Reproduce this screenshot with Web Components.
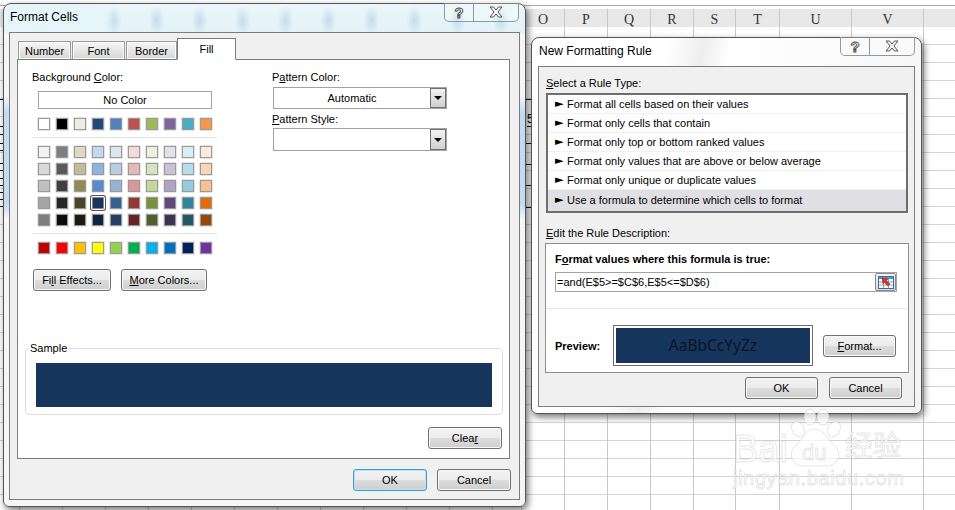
<!DOCTYPE html>
<html>
<head>
<meta charset="utf-8">
<title>Format Cells</title>
<style>
  html, body { margin: 0; height: 100%; overflow: hidden; }
  body { position: relative; width: 955px; height: 510px; font: 11px "Liberation Sans", sans-serif; color: #000; background: #fff; }
  #format-cells {
    left: 3px; top: 3px; width: 523px; height: 504px; --side: 5px;
    --glass:
      linear-gradient(to right, #e6f5f9 85px, transparent 112px) 0 0 / 100% 30px no-repeat,
      linear-gradient(to bottom, transparent 92px, rgba(165,205,240,.65) 108px, rgba(165,205,240,.65) 200px, transparent 215px),
      radial-gradient(ellipse 8px 15px at 50% 55%, rgba(100,150,200,.26), transparent) 2px 0 / 43px 30px repeat-x,
      linear-gradient(#eaf6fa, #e2f3f8 30px, #f6f6f6 30px);
  }
  #new-rule {
    left: 531px; top: 37px; width: 391px; height: 377px; --side: 6px;
    --glass: linear-gradient(100deg, #fff 0 30%, #eee 38%, #fff 44%, #f4f4f4 100%);
  }
  u { text-underline-offset: 1px; }
</style>
</head>
<body>
<xl-sheet></xl-sheet>

<xl-window id="format-cells" heading="Format Cells">
  <xl-tabs></xl-tabs>
  <xl-fill-page></xl-fill-page>
  <xl-footer>
    <xl-button default>OK</xl-button>
    <xl-button>Cancel</xl-button>
  </xl-footer>
</xl-window>

<xl-window id="new-rule" heading="New Formatting Rule">
  <xl-rule-page></xl-rule-page>
</xl-window>

<xl-watermark></xl-watermark>

<script>
const THEME = [
  ['#F2F2F2','#7F7F7F','#DDD9C3','#C6D9F0','#DBE5F1','#F2DCDB','#EBF1DD','#E5E0EC','#DBEEF3','#FDEADA'],
  ['#D8D8D8','#595959','#C4BD97','#8DB3E2','#B8CCE4','#E5B9B7','#D7E3BC','#CCC1D9','#B7DDE8','#FBD5B5'],
  ['#BFBFBF','#3F3F3F','#938953','#548DD4','#95B3D7','#D99694','#C3D69B','#B2A2C7','#92CDDC','#FAC08F'],
  ['#A5A5A5','#262626','#494429','#17365D','#366092','#953734','#76923C','#5F497A','#31859B','#E36C09'],
  ['#7F7F7F','#0C0C0C','#1D1B10','#0F243E','#244061','#632423','#4F6128','#3F3151','#205867','#974806']
]
const BASE = ['#FFFFFF','#000000','#EEECE1','#1F497D','#4F81BD','#C0504D','#9BBB59','#8064A2','#4BACC6','#F79646']
const STANDARD = ['#C00000','#FF0000','#FFC000','#FFFF00','#92D050','#00B050','#00B0F0','#0070C0','#002060','#7030A0']
const RULES = [
  'Format all cells based on their values',
  'Format only cells that contain',
  'Format only top or bottom ranked values',
  'Format only values that are above or below average',
  'Format only unique or duplicate values',
  'Use a formula to determine which cells to format'
]

class Base extends HTMLElement {
  constructor() {
    super()
    this.attachShadow({ mode: 'open' }).innerHTML = this.markup()
  }
}

class XlSheet extends Base {
  markup() {
    const edges = [21, 64, 107, 150, 193, 236, 279, 322, 365, 408, 451, 494, 523, 566, 609, 652, 695, 737, 781, 853, 925, 997]
    const names = { 566: 'O', 609: 'P', 652: 'Q', 695: 'R', 737: 'S', 781: 'T', 853: 'U', 925: 'V' }
    let cols = `<div class="col" style="width:20px"><span></span></div>`
    for (let i = 1; i < edges.length; i++) {
      cols += `<div class="col" style="width:${edges[i] - edges[i - 1]}px"><span>${names[edges[i]] || ''}</span></div>`
    }
    const ticks = [99, 126, 134, 143, 150, 163, 170, 178, 185, 192, 199, 206].map(y => `<i style="left:0;top:${y}px;width:3px"></i>`).join('')
      + [99, 143, 164, 185, 207].map(y => `<i style="left:526px;top:${y}px;width:6px"></i>`).join('')
    return `<style>
      :host { display: block; position: absolute; inset: 0; overflow: hidden; background: #fff; }
      .top { height: 5px; }
      .line { height: 1px; background: #a8a8a8; }
      .gap { height: 3px; }
      .cols { display: flex; height: 501px; background:
        linear-gradient(#e8e8e8 0 18px, transparent 18px),
        repeating-linear-gradient(to bottom, transparent 0 17px, #d4d4d4 17px 18px) 0 18px; }
      .col { flex: none; box-sizing: border-box; border-right: 1px solid #c9c9c9; }
      .col span { display: block; height: 18px; font: 14px/22px "Liberation Serif", serif; text-align: center; color: #333; }
      i { position: absolute; height: 1px; background: #111; }
      b { position: absolute; left: 527px; top: 112px; font: 12px/14px "Liberation Sans", sans-serif; border-bottom: 1px solid #111; }
    </style>
    <div class="top"></div><div class="line"></div><div class="gap"></div>
    <div class="cols">${cols}</div>${ticks}<b>5</b>`
  }
}

class XlWindow extends Base {
  markup() {
    return `<style>
      :host { display: flex; flex-direction: column; position: absolute; box-sizing: border-box;
        border: 1px solid #555; border-radius: 8px 8px 6px 6px;
        padding: 0 var(--side) 6px; background: var(--glass);
        box-shadow: 2px 3px 7px rgba(0,0,0,.55); }
      .bar { flex: none; height: 28px; font: 12px/27px "Liberation Sans", sans-serif; padding-left: 1px; color: #000; }
      .panel { flex: 1; display: flex; flex-direction: column; min-height: 0; background: #f0f0f0; border: 1px solid #7c7c7c; }
      .caption { position: absolute; top: -1px; right: 6px; width: 75px; height: 19px; box-sizing: border-box; display: flex;
        border: 1px solid #8c9aa1; border-top: 0; border-radius: 0 0 5px 5px; background: rgba(255,255,255,.25); }
      .caption div { display: flex; align-items: center; justify-content: center; }
      .help { width: 28px; border-right: 1px solid #8c9aa1; font: bold 15px/17px "Liberation Sans", sans-serif; color: #fff; -webkit-text-stroke: .9px #444; }
      .close { flex: 1; }
    </style>
    <div class="bar"></div>
    <div class="caption">
      <div class="help">?</div>
      <div class="close"><svg width="14" height="12" viewBox="0 0 14 12"><path d="M1 1h3.500L7 4l2.500-3H13L9 6l4 5H9.500L7 8l-2.500 3H1l4-5z" fill="#f4f4f4" stroke="#555" stroke-width="1"/></svg></div>
    </div>
    <div class="panel"><slot></slot></div>`
  }
  connectedCallback() {
    this.shadowRoot.querySelector('.bar').textContent = this.getAttribute('heading')
  }
}

class XlButton extends Base {
  markup() {
    return `<style>
      :host { display: inline-flex; flex: none; align-items: center; justify-content: center; box-sizing: border-box; width: 74px; height: 22px;
        border: 1px solid #707070; border-radius: 3px; box-shadow: inset 0 0 0 1px #f8f8f8;
        background: linear-gradient(#f3f3f3, #ebebeb 49%, #dcdcdc 50%, #cfcfcf); font-size: 11px; cursor: default; }
      :host([default]) { border-color: #36a0d6; box-shadow: inset 0 0 0 1px #b5e4f5; }
    </style><slot></slot>`
  }
}

class XlFooter extends Base {
  markup() {
    return `<style>
      :host { display: flex; justify-content: flex-end; gap: 10px; padding: 10px 8px 0 0; }
    </style><slot></slot>`
  }
}

class XlTabs extends Base {
  markup() {
    return `<style>
      :host { display: flex; flex: none; align-items: flex-end; height: 27px; margin-bottom: -1px; padding-left: 8px; position: relative; z-index: 1; }
      div { box-sizing: border-box; height: 19px; margin-right: 1px; text-align: center; line-height: 18px;
        border: 1px solid #9a9a9a; border-bottom: 1px solid #7c7c7c;
        background: linear-gradient(#f6f6f6, #e8e8e8 45%, #d6d6d6); box-shadow: inset 0 0 0 1px #fbfbfb; }
      .on { height: 22px; margin: 0; background: #fff; border-color: #7c7c7c; border-bottom-color: #fff; box-shadow: none; line-height: 21px; }
    </style>
    <div style="width:53px">Number</div><div style="width:53px">Font</div><div style="width:51px;margin-right:0">Border</div><div class="on" style="width:59px">Fill</div>`
  }
}

class XlSwatches extends Base {
  markup() {
    return `<style>
      :host { display: grid; grid-template-columns: repeat(10, 12px); column-gap: 6px; row-gap: 5px; margin-left: 6px; }
      i { display: block; box-sizing: border-box; height: 12px; border: 1px solid #9a9a9a; box-shadow: 0 0 0 .4px #bdbdbd; position: relative; }
      i.sel { box-shadow: 0 0 0 1px #fff, 0 0 0 2px #555; border-color: #888; border-radius: 1px; }
    </style><slot></slot>`
  }
  connectedCallback() {
    const rows = { base: [BASE], theme: THEME, standard: [STANDARD] }[this.getAttribute('set')]
    let html = ''
    rows.forEach(row => row.forEach(c => {
      html += `<i class="${c === '#17365D' ? 'sel' : ''}" style="background:${c}"></i>`
    }))
    this.shadowRoot.innerHTML = this.shadowRoot.querySelector('style').outerHTML + html
  }
}

class XlCombo extends Base {
  markup() {
    return `<style>
      :host { display: flex; box-sizing: border-box; width: 174px; margin-left: 1px; border: 1px solid #a3a3a3; background: #fff; font-size: 11px; }
      .val { flex: 1; text-align: center; line-height: 20px; }
      .btn { width: 16px; display: flex; align-items: center; justify-content: center; box-sizing: border-box; border: 1px solid #707070;
        background: linear-gradient(#f2f2f2, #cfcfcf); }
      .btn::after { content: ""; border: 4px solid transparent; border-top: 4px solid #000; border-bottom: 0; }
    </style><div class="val"><slot></slot></div><div class="btn"></div>`
  }
}

class XlFillPage extends Base {
  markup() {
    return `<style>
      :host { display: block; flex: none; box-sizing: border-box; height: 400px; margin-left: 7px; width: 493px; padding-top: 10px; background: #fff; border: 1px solid #7c7c7c; }
      .top { display: flex; height: 222px; padding-left: 14px; }
      .left { width: 185px; }
      .right { margin-left: 55px; }
      .label { height: 14px; line-height: 14px; }
      u { text-underline-offset: 1px; }
      .none { box-sizing: border-box; height: 18px; width: 174px; margin: 7px 0 9px 6px; text-align: center; line-height: 16px; border: 1px solid #a3a3a3; }
      hr { height: 1px; margin: 7px 0 8px 1px; border: 0; background: #e3e3e3; }
      .actions { display: flex; gap: 10px; margin: 15px 0 0 1px; }
      .actions xl-button:first-child { width: 78px; }
      .actions xl-button:last-child { width: 86px; }
      fieldset { box-sizing: border-box; height: 74px; margin: 49px 6px 0 7px; padding: 1px 10px 7px; border: 1px solid #d6dfe6; border-radius: 4px; min-width: 0; }
      legend { margin-left: -7px; padding: 0 1px; height: 14px; line-height: 14px; }
      .sample { height: 44px; margin-top: 7px; background: #17365d; }
      .clear { display: flex; justify-content: flex-end; padding: 12px 7px 0 0; }
    </style>
    <div class="top">
      <div class="left">
        <div class="label">Background <u>C</u>olor:</div>
        <div class="none">No Color</div>
        <xl-swatches set="base"></xl-swatches>
        <hr>
        <xl-swatches set="theme"></xl-swatches>
        <hr>
        <xl-swatches set="standard"></xl-swatches>
        <div class="actions"><xl-button>Fi<u>l</u>l Effects...</xl-button><xl-button><u>M</u>ore Colors...</xl-button></div>
      </div>
      <div class="right">
        <div class="label">P<u>a</u>ttern Color:</div>
        <xl-combo style="height:22px;margin-top:3px">Automatic</xl-combo>
        <div class="label" style="margin-top:3px"><u>P</u>attern Style:</div>
        <xl-combo style="height:23px;margin-top:2px"></xl-combo>
      </div>
    </div>
    <fieldset><legend>Sample</legend><div class="sample"></div></fieldset>
    <div class="clear"><xl-button>Clea<u>r</u></xl-button></div>`
  }
}

class XlRuleList extends Base {
  markup() {
    const rows = RULES.map((r, i) => `<div class="${i === 5 ? 'row on' : 'row'}"><span class="mark">►</span>${r}</div>`).join('')
    return `<style>
      :host { display: block; box-sizing: border-box; height: 120px; width: 362px; margin: 3px 0 0 0; background: #fff; border: 2px solid #6e6e6e; }
      .row { box-sizing: border-box; height: 19px; line-height: 18px; padding-left: 7px; display: flex; border-bottom: 1px solid #f1f1f1; white-space: nowrap; }
      .row.on { background: #e0dfe3; height: 21px; line-height: 20px; border: 0; }
      .mark { width: 12px; font: 11px/18px "DejaVu Sans", sans-serif; flex: none; }
      .on .mark { line-height: 20px; }
    </style>${rows}`
  }
}

class XlRefButton extends Base {
  markup() {
    return `<style>
      :host { display: flex; flex: none; align-items: center; justify-content: center; box-sizing: border-box; width: 21px; height: 18px;
        border: 1px solid #8a8a8a; border-radius: 2px; background: linear-gradient(#f4f4f4, #d8d8d8); }
    </style>
    <svg width="16" height="13" viewBox="0 0 16 13">
      <rect x=".5" y=".5" width="15" height="12" fill="#fff" stroke="#3d6c9e"/>
      <rect x="1" y="1" width="14" height="2" fill="#5f8fc4"/>
      <path d="M1 6h14M1 9h14M5.500 3v9M10.500 3v9" stroke="#7fa3c7" fill="none"/>
      <path d="M4 2l6 1-1.500 1.500L12 8l-2 2-3.500-3.500L5 8z" fill="#d8352a" stroke="#8e1b14" stroke-width=".5"/>
    </svg>`
  }
}

class XlRulePage extends Base {
  markup() {
    return `<style>
      :host { display: block; padding: 9px 0 0 7px; }
      u { text-underline-offset: 1px; }
      .label { height: 14px; line-height: 14px; }
      .box { box-sizing: border-box; width: 364px; height: 130px; margin: 3px 0 0 -1px; padding: 8px 0 0 0; background: #fff; border: 1px solid #8f8f8f; }
      .title { height: 14px; line-height: 14px; margin-left: 9px; font-weight: bold; }
      .input { display: flex; align-items: center; justify-content: space-between; box-sizing: border-box; width: 342px; height: 20px; margin: 6px 0 0 9px; padding: 0 0 0 1px; border: 1px solid #a3a3a3; }
      hr { height: 1px; margin: 16px 1px 16px 1px; border: 0; background: #e3e3e3; }
      .preview { display: flex; align-items: center; padding-left: 9px; }
      .name { width: 58px; font-weight: bold; }
      .swatch { box-sizing: border-box; width: 200px; height: 41px; border: 1px solid #6e6e6e; padding: 2px; background: #fff; }
      .swatch div { height: 100%; background: #17365d; color: #0a1526; font: 15.5px/35px "Noto Sans", sans-serif; text-align: center; }
      .preview xl-button { width: 73px; margin-left: 10px; height: 22px; }
      .foot { display: flex; justify-content: flex-end; gap: 11px; width: 356px; padding-top: 4px; }
      .foot xl-button { width: 73px; }
    </style>
    <div class="label"><u>S</u>elect a Rule Type:</div>
    <xl-rule-list></xl-rule-list>
    <div class="label" style="margin-top:13px"><u>E</u>dit the Rule Description:</div>
    <div class="box">
      <div class="title">F<u>o</u>rmat values where this formula is true:</div>
      <div class="input"><span>=and(E$5&gt;=$C$6,E$5&lt;=$D$6)</span><xl-ref-button></xl-ref-button></div>
      <hr>
      <div class="preview">
        <div class="name">Preview:</div>
        <div class="swatch"><div>AaBbCcYyZz</div></div>
        <xl-button><u>F</u>ormat...</xl-button>
      </div>
    </div>
    <div class="foot"><xl-button>OK</xl-button><xl-button>Cancel</xl-button></div>`
  }
}

class XlWatermark extends Base {
  markup() {
    return `<style>
      :host { display: block; position: absolute; left: 725px; top: 405px; width: 190px; height: 95px; color: rgba(255,255,255,.8); pointer-events: none; }
      span { position: absolute; white-space: nowrap; -webkit-text-stroke: 1px rgba(170,170,170,.3); font-family: "Liberation Sans", "Noto Sans CJK SC", sans-serif; }
      svg { position: absolute; left: 0; top: 0; }
    </style>
    <svg width="190" height="95" viewBox="0 0 190 95" fill="rgba(255,255,255,.7)" stroke="rgba(170,170,170,.3)">
      <ellipse cx="85" cy="12" rx="6" ry="8"/><ellipse cx="98" cy="12" rx="6" ry="8"/>
      <ellipse cx="73" cy="24" rx="6" ry="8" transform="rotate(-30 73 24)"/><ellipse cx="109" cy="24" rx="6" ry="8" transform="rotate(30 109 24)"/>
      <path d="M90 24c10 0 13 12 20 17 8 8 2 20-8 20H78c-10 0-16-12-8-20 7-5 10-17 20-17z"/>
    </svg>
    <span style="left:8px;top:25px;font-size:38px;line-height:38px">Bai</span>
    <span style="left:77px;top:37px;font-size:22px;line-height:22px">du</span>
    <span style="left:120px;top:26px;font-size:28px;line-height:32px">经验</span>
    <span style="left:8px;top:61px;font-size:20px;line-height:24px;letter-spacing:.6px">jingyan.baidu.com</span>`
  }
}

customElements.define('xl-sheet', XlSheet)
customElements.define('xl-window', XlWindow)
customElements.define('xl-button', XlButton)
customElements.define('xl-footer', XlFooter)
customElements.define('xl-tabs', XlTabs)
customElements.define('xl-swatches', XlSwatches)
customElements.define('xl-combo', XlCombo)
customElements.define('xl-fill-page', XlFillPage)
customElements.define('xl-rule-list', XlRuleList)
customElements.define('xl-ref-button', XlRefButton)
customElements.define('xl-rule-page', XlRulePage)
customElements.define('xl-watermark', XlWatermark)
</script>
</body>
</html>
